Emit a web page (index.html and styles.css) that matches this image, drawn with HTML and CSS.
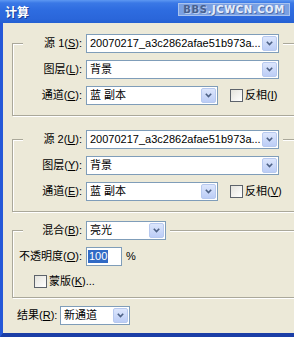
FILE: index.html
```html
<!DOCTYPE html>
<html lang="zh">
<head>
<meta charset="utf-8">
<title>计算</title>
<link rel="stylesheet" href="styles.css">
</head>
<body>
<div class="win">
  <div class="titlebar">
    <span class="title-text">计算</span>
    <span class="mark"><span class="mark-dim">BBS</span>.JCWCN.COM</span>
  </div>
  <div class="content">
    <div class="group g1">
      <div class="ghead">
        <span class="lbl lbl-head">源 1(<u>S</u>):</span>
        <span class="combo w-long"><span class="val">20070217_a3c2862afae51b973a...</span><span class="btn"><svg width="7" height="5" viewBox="0 0 7 5"><path d="M0.8 0.8 L3.5 3.6 L6.2 0.8" fill="none" stroke="#4d6185" stroke-width="1.6"/></svg></span></span>
      </div>
      <div class="row">
        <span class="lbl">图层(<u>L</u>):</span>
        <span class="combo w-long"><span class="val">背景</span><span class="btn"><svg width="7" height="5" viewBox="0 0 7 5"><path d="M0.8 0.8 L3.5 3.6 L6.2 0.8" fill="none" stroke="#4d6185" stroke-width="1.6"/></svg></span></span>
      </div>
      <div class="row">
        <span class="lbl">通道(<u>C</u>):</span>
        <span class="combo w-mid"><span class="val">蓝 副本</span><span class="btn"><svg width="7" height="5" viewBox="0 0 7 5"><path d="M0.8 0.8 L3.5 3.6 L6.2 0.8" fill="none" stroke="#4d6185" stroke-width="1.6"/></svg></span></span>
        <span class="check check-inv"><span class="box"></span>反相(<u>I</u>)</span>
      </div>
    </div>

    <div class="group g2">
      <div class="ghead">
        <span class="lbl lbl-head">源 2(<u>U</u>):</span>
        <span class="combo w-long"><span class="val">20070217_a3c2862afae51b973a...</span><span class="btn"><svg width="7" height="5" viewBox="0 0 7 5"><path d="M0.8 0.8 L3.5 3.6 L6.2 0.8" fill="none" stroke="#4d6185" stroke-width="1.6"/></svg></span></span>
      </div>
      <div class="row">
        <span class="lbl">图层(<u>Y</u>):</span>
        <span class="combo w-long"><span class="val">背景</span><span class="btn"><svg width="7" height="5" viewBox="0 0 7 5"><path d="M0.8 0.8 L3.5 3.6 L6.2 0.8" fill="none" stroke="#4d6185" stroke-width="1.6"/></svg></span></span>
      </div>
      <div class="row">
        <span class="lbl">通道(<u>E</u>):</span>
        <span class="combo w-mid"><span class="val">蓝 副本</span><span class="btn"><svg width="7" height="5" viewBox="0 0 7 5"><path d="M0.8 0.8 L3.5 3.6 L6.2 0.8" fill="none" stroke="#4d6185" stroke-width="1.6"/></svg></span></span>
        <span class="check check-inv"><span class="box"></span>反相(<u>V</u>)</span>
      </div>
    </div>

    <div class="group g3">
      <div class="ghead">
        <span class="lbl lbl-head">混合(<u>B</u>):</span>
        <span class="combo w-blend"><span class="val">亮光</span><span class="btn"><svg width="7" height="5" viewBox="0 0 7 5"><path d="M0.8 0.8 L3.5 3.6 L6.2 0.8" fill="none" stroke="#4d6185" stroke-width="1.6"/></svg></span></span>
      </div>
      <div class="row">
        <span class="lbl">不透明度(<u>O</u>):</span>
        <span class="input"><span class="sel">100</span></span>
        <span class="pct">%</span>
      </div>
      <div class="row row-mask">
        <span class="check check-mask"><span class="box"></span>蒙版(<u>K</u>)...</span>
      </div>
    </div>

    <div class="row row-result">
      <span class="lbl lbl-result">结果(<u>R</u>):</span>
      <span class="combo w-result"><span class="val">新通道</span><span class="btn"><svg width="7" height="5" viewBox="0 0 7 5"><path d="M0.8 0.8 L3.5 3.6 L6.2 0.8" fill="none" stroke="#4d6185" stroke-width="1.6"/></svg></span></span>
    </div>
  </div>
</div>
</body>
</html>
```

FILE: styles.css
```css
html, body {
  margin: 0;
  padding: 0;
}
body {
  background: #ece9d8;
  font-family: "Liberation Sans", "Noto Sans CJK SC", sans-serif;
  font-size: 11px;
  line-height: 13px;
  color: #000;
}
.win {
  width: 294px;
  height: 337px;
  overflow: hidden;
  display: flex;
  flex-direction: column;
}
.titlebar {
  flex: none;
  height: 23px;
  box-sizing: border-box;
  display: flex;
  align-items: flex-start;
  padding: 0 4px 0 5px;
  background: linear-gradient(to bottom, #5d98f2 0px, #3a78e6 3px, #2e6ce0 10px, #2a66da 19px, #2460d2 23px);
}
.title-text {
  margin-top: 5px;
  color: #fff;
  font-family: "Noto Sans CJK SC", sans-serif;
  font-weight: bold;
  font-size: 12px;
  line-height: 14px;
  text-shadow: 1px 1px 0 #1a3f9a;
}
.mark {
  margin-left: auto;
  margin-top: 3px;
  width: 112px;
  height: 13px;
  box-sizing: border-box;
  border: 1px solid #a9c3ee;
  background: #7aa0e2;
  font-family: "DejaVu Sans", sans-serif;
  font-weight: bold;
  font-size: 10px;
  line-height: 11px;
  letter-spacing: 0.6px;
  text-align: center;
  color: #e6edfa;
  text-shadow: 1px 1px 0 #4e6ea8;
}
.mark-dim {
  color: #48608f;
  text-shadow: 1px 1px 0 #b9cdee;
}
.content {
  flex: 1;
  border-left: 3px solid #2558d8;
  border-bottom: 4px solid #1b3ea6;
}
.group {
  margin: 0 -20px 0 9px;
  border: 1px solid #aaa89a;
  box-shadow: inset 1px 1px 0 #fff, 1px 1px 0 #fff;
  padding-bottom: 10px;
}
.g1 { margin-top: 20px; }
.g2 { margin-top: 23px; }
.g3 { margin-top: 18px; padding-bottom: 6px; }
.ghead {
  display: flex;
  align-items: center;
  width: fit-content;
  height: 19px;
  margin: -10px 0 0 10px;
  padding-right: 4px;
  background: #ece9d8;
}
.row {
  display: flex;
  align-items: center;
  height: 19px;
  margin-top: 7px;
}
.row-mask { margin-top: 6px; }
.lbl {
  flex: none;
  width: 69px;
  margin-right: 4px;
  text-align: right;
  white-space: nowrap;
}
.lbl-head { width: 59px; }
u { text-underline-offset: 1px; }
.combo {
  flex: none;
  display: flex;
  align-items: center;
  height: 19px;
  box-sizing: border-box;
  border: 1px solid #7f9db9;
  background: #fff;
}
.w-long { width: 193px; }
.w-mid { width: 132px; }
.w-blend { width: 80px; }
.w-result { width: 70px; }
.val {
  flex: 1;
  min-width: 0;
  padding-left: 3px;
  white-space: nowrap;
  overflow: hidden;
}
.btn {
  flex: none;
  width: 15px;
  height: 15px;
  margin-right: 1px;
  box-sizing: border-box;
  border: 1px solid #b7c9ef;
  border-radius: 2px;
  background: linear-gradient(to bottom, #dce6fc, #bccdf6);
  display: flex;
  align-items: center;
  justify-content: center;
}
.check {
  display: flex;
  align-items: center;
  white-space: nowrap;
}
.check-inv { margin-left: 12px; }
.check-mask { margin-left: 21px; }
.box {
  flex: none;
  width: 13px;
  height: 13px;
  box-sizing: border-box;
  border: 1px solid #5d636b;
  background: linear-gradient(135deg, #e4e3dc, #ffffff);
  margin-right: 2px;
}
.input {
  flex: none;
  width: 36px;
  height: 19px;
  box-sizing: border-box;
  border: 1px solid #7f9db9;
  background: #fff;
  display: flex;
  align-items: center;
  padding-left: 1px;
}
.sel {
  background: #316ac5;
  color: #fff;
  padding: 0 1px;
}
.pct { margin-left: 4px; }
.row-result {
  margin: 8px 0 0 14px;
}
.lbl-result { width: 39px; }
```
